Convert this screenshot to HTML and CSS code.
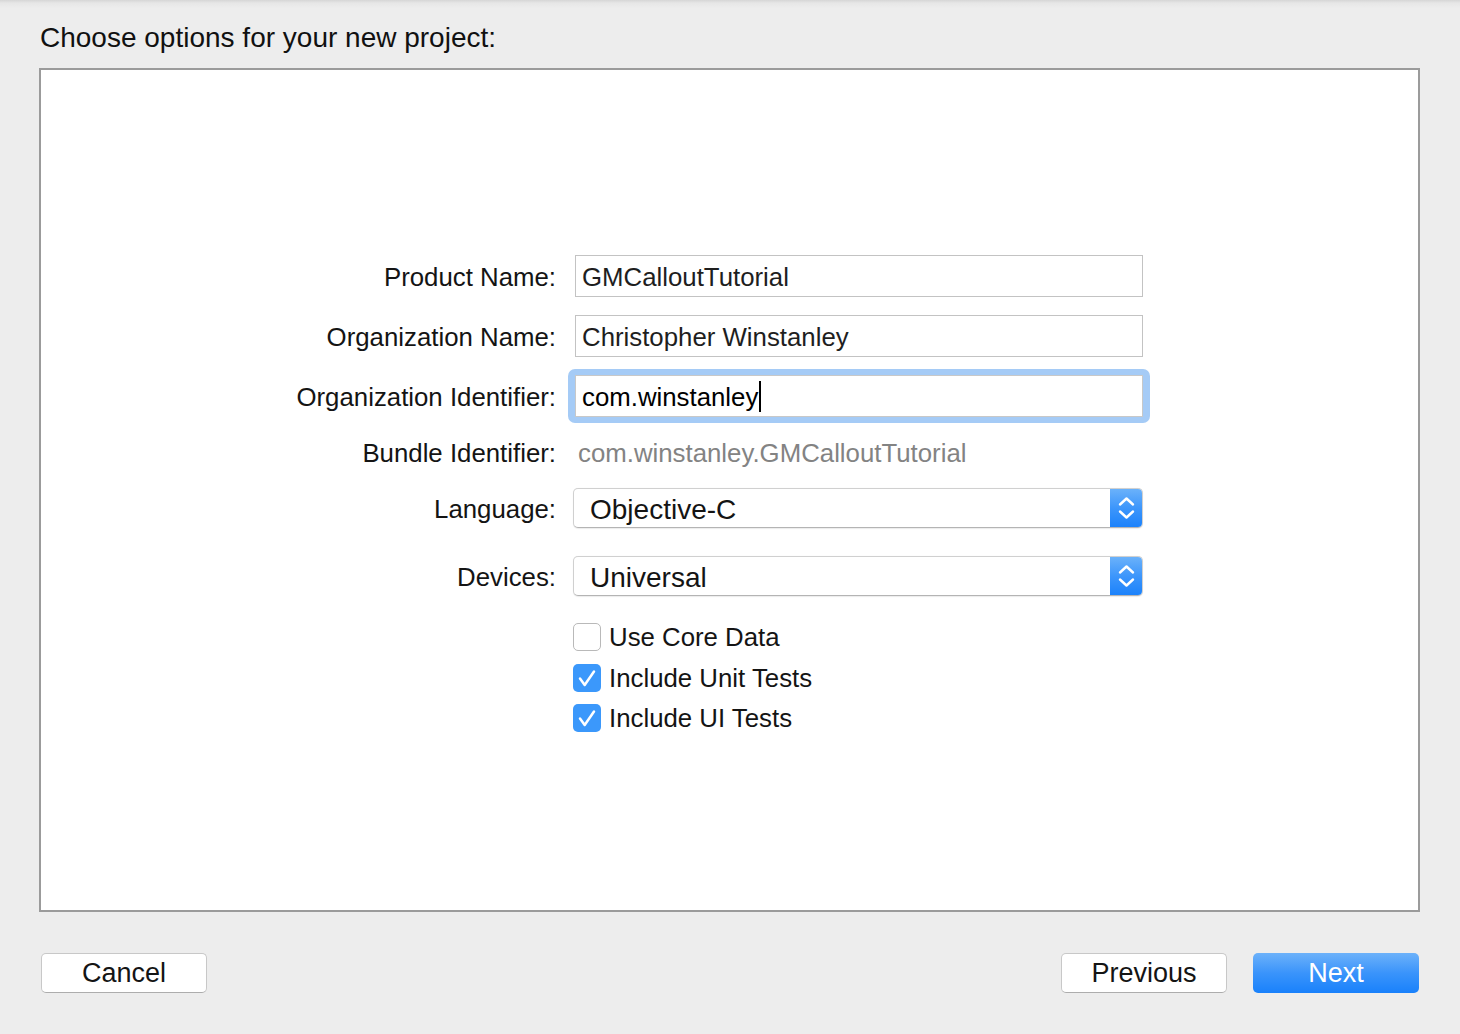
FILE: index.html
```html
<!DOCTYPE html>
<html>
<head>
<meta charset="utf-8">
<link rel="stylesheet" href="styles.css">
</head>
<body>
<div class="page">
  <h1 class="title">Choose options for your new project:</h1>
  <div class="panel">
    <div class="form">
      <div class="row row-name">
        <div class="label">Product Name:</div>
        <div class="field">GMCalloutTutorial</div>
      </div>
      <div class="row row-org">
        <div class="label">Organization Name:</div>
        <div class="field">Christopher Winstanley</div>
      </div>
      <div class="row row-ident">
        <div class="label">Organization Identifier:</div>
        <div class="focus-ring">
          <div class="field field-focused"><span>com.winstanley</span><span class="caret"></span></div>
        </div>
      </div>
      <div class="row row-bundle">
        <div class="label">Bundle Identifier:</div>
        <div class="static">com.winstanley.GMCalloutTutorial</div>
      </div>
      <div class="row row-lang">
        <div class="label">Language:</div>
        <div class="popup">
          <div class="popup-text">Objective-C</div>
          <div class="popup-arrows">
            <svg width="33" height="40" viewBox="0 0 33 40"><path d="M10 16.5 L16.5 10.5 L23 16.5" fill="none" stroke="#fff" stroke-width="2.4" stroke-linecap="round" stroke-linejoin="round"/><path d="M10 23.5 L16.5 29.5 L23 23.5" fill="none" stroke="#fff" stroke-width="2.4" stroke-linecap="round" stroke-linejoin="round"/></svg>
          </div>
        </div>
      </div>
      <div class="row row-dev">
        <div class="label">Devices:</div>
        <div class="popup">
          <div class="popup-text">Universal</div>
          <div class="popup-arrows">
            <svg width="33" height="40" viewBox="0 0 33 40"><path d="M10 16.5 L16.5 10.5 L23 16.5" fill="none" stroke="#fff" stroke-width="2.4" stroke-linecap="round" stroke-linejoin="round"/><path d="M10 23.5 L16.5 29.5 L23 23.5" fill="none" stroke="#fff" stroke-width="2.4" stroke-linecap="round" stroke-linejoin="round"/></svg>
          </div>
        </div>
      </div>
      <div class="row row-check first-check">
        <div class="label"></div>
        <div class="checkbox"></div>
        <div class="check-label">Use Core Data</div>
      </div>
      <div class="row row-check second-check">
        <div class="label"></div>
        <div class="checkbox checked"><svg width="28" height="28" viewBox="0 0 28 28"><path d="M7 14.5 L11.7 21 L21 7.5" fill="none" stroke="#fff" stroke-width="2.5" stroke-linecap="round" stroke-linejoin="round"/></svg></div>
        <div class="check-label">Include Unit Tests</div>
      </div>
      <div class="row row-check third-check">
        <div class="label"></div>
        <div class="checkbox checked"><svg width="28" height="28" viewBox="0 0 28 28"><path d="M7 14.5 L11.7 21 L21 7.5" fill="none" stroke="#fff" stroke-width="2.5" stroke-linecap="round" stroke-linejoin="round"/></svg></div>
        <div class="check-label">Include UI Tests</div>
      </div>
    </div>
  </div>
  <div class="buttons">
    <div class="button">Cancel</div>
    <div class="spacer"></div>
    <div class="button">Previous</div>
    <div class="button button-primary">Next</div>
  </div>
</div>
</body>
</html>
```
FILE: styles.css
```css
html, body {
  margin: 0;
  padding: 0;
}
body {
  background: #ededed;
  font-family: "Liberation Sans", Arial, sans-serif;
  color: #141414;
  width: 1460px;
  height: 1034px;
  overflow: hidden;
}
.page {
  background: linear-gradient(to bottom, #d6d6d6 0px, #e6e6e6 3px, #ededed 8px, #ededed 100%);
  height: 1034px;
  padding-top: 22px;
  box-sizing: border-box;
}
.title {
  margin: 0 0 0 40px;
  font-size: 28px;
  font-weight: normal;
  line-height: 32px;
  height: 32px;
  color: #111;
}
.panel {
  margin: 14px 0 0 39px;
  width: 1381px;
  height: 844px;
  box-sizing: border-box;
  border: 2px solid #9b9b9b;
  background: #fff;
}
.form {
  padding-top: 185px;
  display: flex;
  flex-direction: column;
}
.row {
  display: flex;
  align-items: center;
}
.label {
  width: 515px;
  flex: none;
  text-align: right;
  font-size: 25.8px;
  color: #141414;
  margin-right: 17px;
  white-space: nowrap;
  padding-top: 2px;
}
.field {
  margin-left: 2px;
  width: 568px;
  height: 42px;
  box-sizing: border-box;
  border: 1px solid #c3c3c3;
  background: #fff;
  font-size: 25.8px;
  line-height: 40px;
  padding-left: 6px;
  padding-top: 2px;
  color: #1e1e1e;
  display: flex;
  align-items: center;
}
.row-name { height: 42px; }
.row-org { height: 42px; margin-top: 18px; }
.row-ident { height: 42px; margin-top: 18px; }
.focus-ring {
  margin-left: -5px;
  padding: 6px 7px;
  margin-top: -6px;
  margin-bottom: -6px;
  background: #a5cbf6;
  border-radius: 7px;
}
.focus-ring .field {
  margin-left: 0;
  border-color: #c8c8c8;
  color: #000;
}
.caret {
  display: inline-block;
  width: 2px;
  height: 31px;
  background: #000;
  margin-left: 1px;
  margin-bottom: 2px;
}
.row-bundle { height: 36px; margin-top: 17px; }
.static {
  font-size: 25.8px;
  color: #838383;
  margin-left: 5px;
  padding-top: 2px;
}
.row-lang { height: 40px; margin-top: 18px; }
.row-dev { height: 40px; margin-top: 28px; }
.popup {
  width: 570px;
  height: 40px;
  box-sizing: border-box;
  border: 1px solid #d0d0d0;
  border-bottom-color: #b4b4b4;
  border-radius: 5px;
  background: #fff;
  display: flex;
  overflow: hidden;
  box-shadow: 0 0.5px 1px rgba(0,0,0,0.08);
}
.popup-text {
  flex: 1;
  font-size: 28px;
  line-height: 38px;
  padding-top: 2px;
  padding-left: 16px;
  color: #141414;
}
.popup-arrows {
  width: 33px;
  flex: none;
  margin: -1px -1px -1px 0;
  height: 40px;
  background: linear-gradient(to bottom, #6db3fa 0%, #3d96fb 50%, #1a81fb 100%);
  border-radius: 0 5px 5px 0;
}
.popup-arrows svg { display: block; }
.row-check { height: 28px; }
.first-check { margin-top: 27px; }
.second-check { margin-top: 13px; }
.third-check { margin-top: 12px; }
.checkbox {
  width: 28px;
  height: 28px;
  box-sizing: border-box;
  border: 1px solid #b9b9b9;
  border-radius: 5px;
  background: #fff;
  flex: none;
}
.checkbox.checked {
  border: none;
  background: #3b98fb;
}
.checkbox svg { display: block; }
.check-label {
  font-size: 25.8px;
  margin-left: 8px;
  color: #141414;
  padding-top: 1px;
}
.buttons {
  display: flex;
  margin: 41px 0 0 41px;
  width: 1378px;
  height: 40px;
}
.spacer { flex: 1; }
.button {
  width: 166px;
  height: 40px;
  box-sizing: border-box;
  border: 1px solid #c8c8c8;
  border-bottom-color: #adadad;
  border-radius: 5px;
  background: #fff;
  font-size: 27px;
  line-height: 38px;
  text-align: center;
  color: #141414;
}
.button + .button { margin-left: 26px; }
.button-primary {
  border: none;
  background: linear-gradient(to bottom, #6cb2fa 0%, #3a94fb 50%, #1981fb 100%);
  color: #fff;
  line-height: 40px;
}
```
